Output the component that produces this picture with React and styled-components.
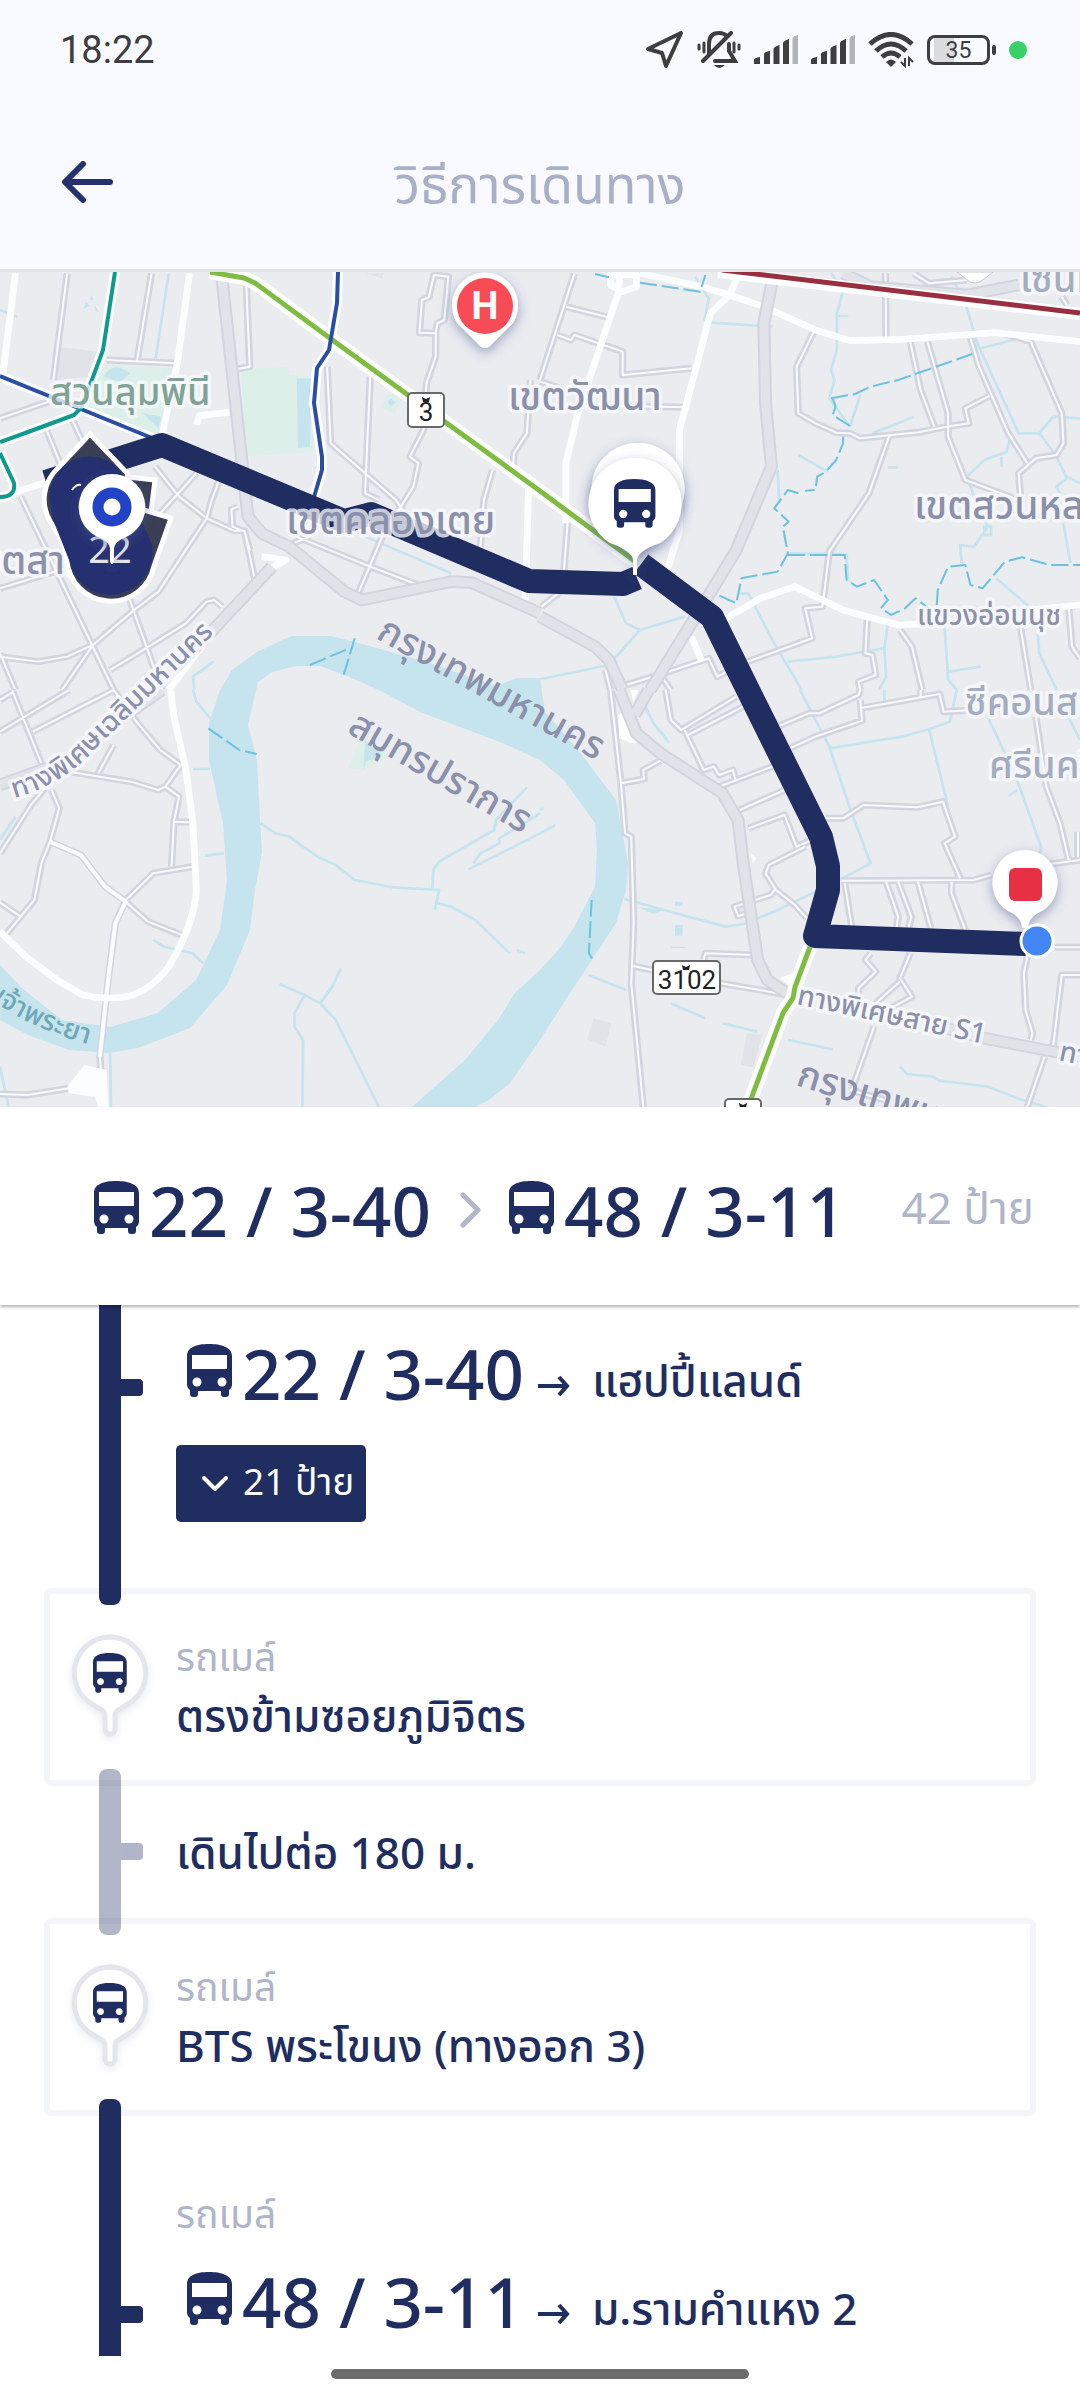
import React from 'react';
import styled, { createGlobalStyle, ThemeProvider } from 'styled-components';

const theme = {
  color: {
    navy: '#202d60',
    title: '#a9afc6',
    muted: '#b1b5c9',
    border: '#f4f5f8',
    header: '#f8faff',
    status: '#3e3e3e',
  },
};

// every tile is drawn on a 1568 x 1260 grid
const tiles = [
  {
    x: 0,
    y: 270,
    park: 'M700 300L835 290L840 315L910 320L910 545L720 558Z M310 285L500 295L465 500L250 405L275 330Z M1130 370L1165 390L1145 432L1105 412Z',
    pond: 'M862 325L905 325L900 530L865 535Z M300 320Q330 270 378 310L350 335Z M415 430L468 440L460 475Z M1135 385l14 12-14 12-10-12z M250 95l10 12-18 10zM265 75l8 14-12 0zM275 105l12 20-10 0z',
    block: 'M180 232L290 245L260 320L160 330Z M1060 10L1115 10L1110 25Z',
    canal: 'M490 10L452 265M565 1260L560 1220L620 1175M0 120l50 20M1060 800L1310 910',
    minor:
      'M195 10L155 330M440 10L398 272M310 270L515 280M715 40L725 290L690 297M0 445L150 392M60 680L330 1260M135 480L190 620M210 450L260 560M370 970L470 1260M450 590L520 680L600 745L680 782L710 782L740 930M640 620L615 690L600 745L460 965L390 1020L270 1125L195 1160L110 1175L0 1160M570 610L430 770M690 710L672 718L675 770L710 785L725 840M320 1200L400 1150L540 1060L600 995L622 990L645 1010M270 1125L180 1260M0 1150L45 1260M0 955L190 895M950 290L960 520L1150 690L1180 740M1075 320L1060 670L1100 690M1265 190L1265 260L1238 340L1230 480L1190 560L1215 580L1200 650L1110 800L1040 970M1260 15L1302 20L1290 150L1270 160L1265 190L1218 188L1225 90L1245 82Z M1430 600L1405 690L1395 830M1540 330L1530 490L1492 550L1490 590M860 800L1075 890L1215 945M900 800L850 820',
    major: 'M45 10L10 300L0 300M550 10L515 280L472 490M570 465L580 437L665 427M0 682L140 635M1535 650L1525 990M490 1260L600 1110M760 860L830 870L780 900',
    express: 'M645 30L720 740L760 790L840 830L1000 965L1050 990L1310 935L1370 938L1568 1030M790 890L600 1100L500 1200',
    dash: 'M900 1185L1015 1135M1030 1105L995 1225',
  },
  {
    x: 540,
    y: 270,
    canal:
      'M450 20L490 85L478 150L495 158L675 170M845 10L880 60L862 130L862 240L845 300L855 330L840 385L900 470M862 138L895 138M1195 20L1235 100L1270 220L1310 310L1390 490L1450 490L1490 440L1568 445M1280 235L1390 205M930 375L900 470M965 490L1040 460L1085 440M1450 490L1500 560L1530 625L1500 650L1510 670M1530 620L1568 640M1365 500L1355 545L1290 570L1240 620L1260 680L1300 770L1260 830L1220 825L1225 885M690 600L695 700M580 970L605 970L680 1120L760 1260M215 980L250 1060L290 1080M720 1175L860 1160L1000 1135L1010 1060M1000 1135L1005 1220L985 1260M1175 1070L1185 1230L1210 1260M1185 1205L1280 1190M1445 1090L1450 1150L1500 1260M1520 760L1540 880M750 555L835 605M1325 925L1420 1010M1340 560V590M0 1228L200 1185L290 1080L420 1040M1290 770h20v25h-20zM720 850L890 852L895 935M1010 592h30',
    minor:
      'M100 10L0 330M75 110L210 145M50 195L90 210L100 195L240 245L240 315L440 295M0 335L60 355M230 408L430 412M80 760L65 960L5 1010M1003 10L1005 220M795 185L745 290L750 430L800 460L860 488L900 490L930 505L1100 487L1180 470L1245 460L1235 415L1305 378M1075 215L1105 360L1145 470M1125 215L1185 430L1185 500L1235 630L1390 690M1250 205L1275 290L1360 490L1415 580M1345 190L1425 215L1515 430L1520 520L1500 555L1440 565L1390 610L1395 680M1015 495L955 670L840 845L830 930L820 1010L770 1015L790 1105L590 1180L515 1220L490 1165L360 1210L250 1245M950 1050L945 1150L965 1155L975 1215L925 1235L930 1260M1045 1080L1080 1130L1110 1260M1395 1070L1425 1260M1535 1010L1545 1130L1568 1165M1085 10L1130 40L1240 30M350 1215L380 1260M190 1200L205 1260M1515 80L1530 105',
    major:
      'M290 10L470 50L550 75L650 110L800 180L900 212L1050 208L1320 188L1568 215M230 60L110 430L75 580L75 760M575 20L550 75L495 130L405 480L405 780L370 900M540 1045L640 985L740 950L880 1020L1040 1065L1100 1062M440 1100L470 1175M1420 1020L1568 1005M205 15H280V50L240 65L205 45ZM230 15V50',
    express: 'M675 30L650 160L655 400L672 590L570 840L440 1060L320 1260M0 1040L160 1130L200 1170L240 1260M880 10L960 50L1240 75L1390 45',
    dash: 'M845 385L915 372L960 350L1040 330L1255 252M850 385L858 410L850 435L900 468M880 500L880 520L860 570L830 605L805 620L800 660L770 662M750 670L720 660L680 715L722 755L705 770L720 850L690 905L585 925L570 1000L510 972M720 855L885 855L890 930L920 950L970 930L1010 990L990 1015L1020 1035L1060 1015L1090 985L1135 1020M1152 1005L1155 960L1185 890L1235 885L1250 945L1285 955L1350 875L1400 862L1480 885L1568 885M160 12L200 22M290 38L465 65L480 15',
  },
  {
    x: 0,
    y: 690,
    park: 'M1050 140L1125 195L1060 240L1010 235Z',
    pond: 'M1060 150L1110 195L1062 215L1055 240Z',
    canal:
      'M560 0L570 35L615 90M560 237L610 237M757 400L800 430L840 440L880 470L930 505L975 525L1030 570L1140 592L1275 600L1262 660M1270 640L1310 650L1380 690L1480 790M1500 780L1525 790M1255 600L1258 540L1275 515L1435 420L1440 390L1530 292M1568 430L1360 538M1375 520L1395 490L1450 460L1450 445L1568 370M812 882L885 915L930 940L975 990L1100 1251M885 915L855 970L855 1010L880 1050L878 1251M990 835L965 890L930 940M445 750L475 770L560 790L590 820M320 1090L322 1251M0 450L45 380M0 1130L25 1251M595 497L650 490',
    minor:
      'M35 0L120 220M0 125L200 0M95 125L330 0M0 30L35 8M330 0L400 100L465 180L525 225L480 290L520 320L505 395L498 530M505 395L550 397M330 165L285 250M200 245L380 275L460 300L480 290M150 300L172 355L145 455L120 520L100 630L60 680L20 730M0 638L60 680M130 295L90 345L0 490M145 455L235 495L305 590L365 635L430 695L540 740M560 530L445 550L365 630L335 700L315 860L290 1100L300 1251M0 1212L80 1215L200 1195',
    major: 'M495 0L505 80L540 240L560 400L570 600Q565 700 490 830Q440 900 370 920Q300 930 240 915L165 870L75 800L0 725',
    junction: 'M195 1190L245 1125L310 1140L315 1251L285 1251L275 1220L200 1210Z',
    thin: 'M145 455L235 495L305 590L365 635L335 700L315 860L290 1100',
    express: 'M0 285L160 225M250 160L470 0',
    dash: 'M605 115L695 180L745 192',
  },
  {
    x: 540,
    y: 690,
    block: 'M155 985L207 1000L190 1070L137 1048ZM600 1030L645 1035L620 1132L583 1125Z',
    pond: 'M392 705h22v32h-22zM285 652l75 8-30 12zM392 635h22v12h-22zM380 770h40v4h-40z',
    canal:
      'M755 0L840 170L905 370L960 520L850 580L690 660L600 700L540 710L430 680L245 627M840 175L1050 140L1130 118L1190 95L1210 0M1130 118L1185 350M1290 60L1330 145L1385 270L1455 470L1450 500M1385 300L1360 318M305 50L330 100L375 158M1000 0V35M140 855L250 900M380 940L480 985M530 1000L630 1025M720 1050L850 1078M1045 1130L1065 1152L1140 1160L1160 1172L1300 1190L1400 1230L1470 1251M0 430L45 405M1500 10L1568 150M0 360L10 355',
    minor:
      'M205 0L235 280L247 430L265 440L272 700L265 880L300 1251M235 280L302 267L300 240L350 212M365 0L380 90L410 120L570 20M430 135L590 50M420 120L475 240L505 230L520 255L560 240L567 268M520 290L700 220M580 360L710 300M605 415L710 375L745 470L790 450M770 470L665 525L655 550L685 600L740 645L775 685M685 595L670 615L565 650L575 678L610 668M690 110L780 70L810 70L925 15L930 0M725 175L800 140L935 92L930 30M930 55L1160 12L1172 65L1260 60M1105 0V20M830 385L880 385L940 345L1095 352L1170 335L1205 440L1175 460L1220 565M875 572L1260 570L1310 555M1480 522L1568 510M1440 80L1470 290L1510 400L1535 510M1562 425V500M885 580L905 710M1005 575L1040 680L1035 715M1040 575L1078 680L1070 715M1097 575L1135 715M1195 575L1195 610L1235 720M270 828L325 840M525 880L720 915M475 810L480 790L620 795M960 790L945 810L975 845L925 895L925 920M1075 790L1045 865L1080 920L1010 960M1045 875L975 940M970 1010L905 1200M1415 800L1405 850L1410 960L1430 1030L1425 1050M1495 772H1568M1568 855L1515 855L1490 1070M1465 1100L1415 1251M900 1200L1000 1230M635 800L640 850L690 910',
    junction: 'M228 75L250 60L290 155L265 160L230 145ZM262 0H285L272 35ZM612 490L628 505L618 520ZM745 845L735 895L695 865Z',
    express: 'M230 0L280 130L350 190L530 310L575 390L590 520L632 810L660 870L740 925M315 0L275 75M1180 1015L1290 1045L1568 1100',
    dash: 'M150 630L142 790L157 815',
  },
];

const river =
  'M0 965L24 990L62 1020L110 1027L158 1013L196 980L220 930L227 880L223 823L209 760L209 723L220 690L232 670L257 652L291 636H331L355 642L430 663L496 686L516 678H540L545 712L578 750L616 800L628 863L626 890L616 923L561 1007L540 1040L510 1083L489 1100L475 1107H412L465 1060L498 1020L515 993L540 970L561 947L574 927L595 887L597 850L595 823L564 780L540 760L500 742L420 712L379 690L344 675L320 666H296L272 672L258 682L248 725L257 760L260 820L262 852L255 890L250 930L227 985L190 1028L138 1048L110 1053L69 1050L28 1035L0 1020Z';

const tealLine = 'M115 272L103 350L93 377L81 408L74 415L28 432L0 442M0 453L14 483Q16 497 0 497';
const blueLine = 'M0 376L152 438M338 272L337 303L329 350L317 368L314 403L322 457V470L314 497';
const greenLine = 'M210 272L244 278L255 283L331 339L540 491L636 562M810 947L795 987L793 998L783 1013L748 1107';

const TransitMap = () => (
  <StMap viewBox="0 272 1080 835" role="img" aria-label="แผนที่เส้นทาง">
    <defs>
      <path id="chaloem" d="M14 798Q64 785 98 746L230 618" />
      <path id="chaophraya" d="M-8 1000Q34 1032 110 1050" />
      <filter id="pinShadow" x="-50%" y="-50%" width="200%" height="200%">
        <feDropShadow dx="0" dy="4" stdDeviation="6" floodColor="#4a5590" floodOpacity="0.5" />
      </filter>
    </defs>
    <rect y="272" width="1080" height="835" fill="#eaecf0" />
    <path d={river} fill="#c6e4ee" />
    {tiles.map(({ x, y, park, pond, block, canal, minor, major, thin, junction, express, dash }) => (
      <g
        key={`${x}-${y}`}
        transform={`translate(${x} ${y}) scale(0.3444 0.3333)`}
        fill="none"
        strokeLinejoin="round"
      >
        <path d={block} fill="#e2e3e8" />
        <path d={park} fill="#dcefe8" />
        <path d={pond} fill="#c6e4ee" />
        <path d={canal} stroke="#c6e4ee" strokeWidth="8" />
        <path d={minor} stroke="#d3d5de" strokeWidth="21" />
        <path d={minor} stroke="#f8f9fc" strokeWidth="6" />
        <path d={thin} stroke="#fafbfd" strokeWidth="12" />
        <path d={major} stroke="#fcfdfe" strokeWidth="20" />
        <path d={junction} fill="#fcfdfe" />
        <path d={express} stroke="#d3d5de" strokeWidth="38" />
        <path d={express} stroke="#e2e3e9" strokeWidth="26" />
        <path d={dash} stroke="#6dc3dc" strokeWidth="6" strokeDasharray="50 14" />
      </g>
    ))}

    <g fill="none" strokeLinejoin="round">
      <g stroke="#fff" strokeWidth="10">
        <path d={tealLine} />
        <path d={blueLine} />
        <path d={greenLine} strokeWidth="14" />
        <path d="M718 272L1080 314" strokeWidth="12" />
      </g>
      <path d={greenLine} stroke="#7fbd42" strokeWidth="5" />
      <path d={blueLine} stroke="#2a4ea6" strokeWidth="4" />
      <path d={tealLine} stroke="#0f9a90" strokeWidth="4" />
      <path d="M722 270L1080 313" stroke="#982f40" strokeWidth="5" />
      <g stroke="#202d60" strokeWidth="24">
        <path d="M46 482L162 445L344 521L371 514L529 581L623 584L637 578" />
        <path d="M641 564L712 617L748 690L821 837L828 866V890L815 936L1026 944" />
      </g>
    </g>

    <StLabel x="50" y="405" $size={38} $green>สวนลุมพินี</StLabel>
    <StLabel x="286" y="534" $size={39}>เขตคลองเตย</StLabel>
    <StLabel x="508" y="410" $size={39}>เขตวัฒนา</StLabel>
    <StLabel x="914" y="519" $size={39}>เขตสวนหลวง</StLabel>
    <StLabel x="-32" y="574" $size={39}>เขตสาทร</StLabel>
    <StLabel x="917" y="625" $size={28}>แขวงอ่อนนุช</StLabel>
    <StLabel x="965" y="715" $size={38} $light>ซีคอนสแควร์</StLabel>
    <StLabel x="989" y="778" $size={38} $light>ศรีนครินทร์</StLabel>
    <StLabel x="1020" y="292" $size={38} $light>เซ็นทรัล</StLabel>
    <StLabel $size={28}><textPath href="#chaloem">ทางพิเศษเฉลิมมหานคร</textPath></StLabel>
    <StLabel $size={28} $water><textPath href="#chaophraya">เจ้าพระยา</textPath></StLabel>
    <StLabel transform="translate(375 638) rotate(29)" $size={38} $plain>กรุงเทพมหานคร</StLabel>
    <StLabel transform="translate(346 732) rotate(30)" $size={38} $plain>สมุทรปราการ</StLabel>
    <StLabel transform="translate(796 1004) rotate(12)" $size={28}>ทางพิเศษสาย S1</StLabel>
    <StLabel transform="translate(1058 1060) rotate(12)" $size={28}>ทางพิเศษสาย S1</StLabel>
    <StLabel transform="translate(795 1085) rotate(17)" $size={38} $plain>กรุงเทพมหานคร</StLabel>

    <g fill="#fff" stroke="#686868" strokeWidth="2">
      <rect x="408" y="393" width="36" height="34" rx="4" />
      <rect x="653" y="961" width="67" height="33" rx="4" />
      <rect x="725" y="1099" width="36" height="34" rx="4" />
    </g>
    <StShield x="426" y="421">3</StShield>
    <StShield x="687" y="989">3102</StShield>
    <path d="M422 397l4 2 4-2-1 5h-6zM682 965l4 2 4-2-1 5h-6zM739 1103l4 2 4-2-1 5h-6z" fill="#222" />

    <g filter="url(#pinShadow)">
      <path d="M485 348q-4 0-8-5l-20-20A33 33 0 1 1 513 323l-20 20q-4 5-8 5z" fill="#fff" />
    </g>
    <circle cx="485" cy="306" r="28" fill="#f84b55" />
    <StPinLetter x="485" y="319">H</StPinLetter>
    <path d="M957 272h36l-9 7q-9 8-18 0z" fill="#fff" stroke="#c9cad0" strokeWidth="1" />

    {/* overlapping stop bubbles behind the start pin */}
    <g strokeLinejoin="round">
      <path d="M100 474L155 480L150 520L110 540Z" fill="#3a3f56" stroke="#fff" strokeWidth="5" />
      <path d="M120 503L171 518L154 566A44 44 0 0 1 67 560L62 530Z" fill="#3a3f56" stroke="#fff" strokeWidth="5" />
      <path d="M90 434L58 468A43 43 0 0 0 50 521L66 548L112 520L128 474Z" fill="#3a3f56" stroke="#fff" strokeWidth="5" />
      <path d="M50 503A40 40 0 0 1 129 490L152 545A42 42 0 0 1 69 560L54 522Z" fill="#253071" />
      <path d="M72 490q4-6 9-5" stroke="#fff" strokeWidth="2" fill="none" />
    </g>
    <StBubbleText x="110" y="563">22</StBubbleText>

    <g fill="#fff">
      <path d="M638 443A46 46 0 0 1 663 528L638 556L613 528A46 46 0 0 1 638 443z" filter="url(#pinShadow)" />
      <g filter="url(#pinShadow)">
        <path d="M112 474A33 33 0 0 1 128 536Q115 541 114 548V562q-2 4-4 0V548Q109 541 96 536A33 33 0 0 1 112 474z" />
        <path d="M635 458A46 46 0 0 1 660 543Q637 551 637 560V575H633V560Q633 551 610 543A46 46 0 0 1 635 458z" />
        <path d="M1025 850A33 33 0 0 1 1042 911Q1028 917 1028 928H1022Q1022 917 1008 911A33 33 0 0 1 1025 850z" />
      </g>
    </g>
    <circle cx="112" cy="507" r="14" fill="none" stroke="#2243c5" strokeWidth="11" />
    <g transform="translate(614 479) scale(0.92)">
      <BusShape />
    </g>
    <rect x="1009" y="868" width="33" height="33" rx="6" fill="#e83045" />
    <circle cx="1037" cy="941" r="16" fill="#4285f4" stroke="#fff" strokeWidth="3" />
  </StMap>
);

const BusShape = () => (
  <>
    <path
      d="M0 12C0 3 10 0 22 0S45 3 45 12V41Q45 44 42 46V50Q42 53 39 53H37Q34 53 34 50V47H11V50Q11 53 8 53H6Q3 53 3 50V46Q0 44 0 41Z"
      fill="#202d60"
    />
    <path d="M5 11H40V25H5Z" fill="#fff" />
    <circle cx="10" cy="38" r="4.500" fill="#fff" />
    <circle cx="35" cy="38" r="4.500" fill="#fff" />
  </>
);

const BusIcon = () => (
  <StBus viewBox="0 0 45 53" aria-hidden="true">
    <BusShape />
  </StBus>
);

const StopPin = () => (
  <StPin viewBox="0 0 84 110" aria-hidden="true">
    <path
      d="M42 4A36 36 0 0 1 60 71L50 77Q47 79 47 82V96A5 5 0 0 1 37 96V82Q37 79 34 77L24 71A36 36 0 0 1 42 4z"
      fill="#fff"
      stroke="#e4e6ec"
      strokeWidth="5"
    />
    <g transform="translate(25 20) scale(0.75)">
      <BusShape />
    </g>
  </StPin>
);

const SignalIcon = () => (
  <svg width="44" height="30" viewBox="0 0 44 30" fill="#3e3e3e">
    <path d="M0 29V25Q0 23 6 22V29ZM10 29V19Q10 17 16 16V29ZM19.500 29V14Q19.500 12 25.500 10V29ZM29 29V8Q29 6 35 4V29Z" />
    <path d="M38.500 29V4Q38.500 1 44 0V29Z" fill="#b2b3b6" />
  </svg>
);

const StatusBar = () => (
  <StStatus>
    <time>18:22</time>
    <StStatusIcons>
      <svg width="38" height="38" viewBox="0 0 38 38">
        <path d="M35 2L20 35L16 22L2 18Z" fill="none" stroke="#3e3e3e" strokeWidth="4" strokeLinejoin="round" />
      </svg>
      <svg width="44" height="38" viewBox="0 0 44 38" fill="none" stroke="#3e3e3e" strokeLinecap="round">
        <path d="M12 23V13Q12 2 22 2Q27 2 30 5M32 13V20L38 30H18" strokeWidth="4" />
        <path d="M6 30L34 2" strokeWidth="4" />
        <path d="M2 14v4M7 12v9M37 12v9M42 14v4" strokeWidth="3" />
        <path d="M17 34H28Q22 40 17 34Z" fill="#3e3e3e" stroke="none" />
      </svg>
      <SignalIcon />
      <SignalIcon />
      <svg width="46" height="36" viewBox="0 0 46 36" fill="none" stroke="#3e3e3e" strokeWidth="5">
        <path d="M2 12Q23 -7 44 12M8 19Q23 5 38 19M14 25Q23 17 32 25" />
        <path d="M18 30Q23 25 28 30L23 35Z" fill="#3e3e3e" stroke="none" />
        <path d="M33 30L37 34V26M45 30L41 26V34" strokeWidth="2" />
      </svg>
      <StBattery>
        <span>35</span>
      </StBattery>
      <StDot />
    </StStatusIcons>
  </StStatus>
);

const RouteName = ({ name }) => (
  <StRoute>
    <BusIcon />
    <span>{name}</span>
  </StRoute>
);

const Leg = ({ name, to, stops, caption, tick, last }) => (
  <StLeg>
    <StRail $tick={tick} $top={caption && 17} $bottom={!last && 17} />
    <StLegBody $caption={caption}>
      {caption && <StCaption>{caption}</StCaption>}
      <StLegTitle>
        <RouteName name={name} />
        <StArrow viewBox="0 0 32 22" aria-hidden="true">
          <path d="M0 11H29M21 2L29 11L21 20" fill="none" stroke="#202d60" strokeWidth="4" />
        </StArrow>
        <StName>{to}</StName>
      </StLegTitle>
      {stops && (
        <StStopsButton type="button">
          <svg width="28" height="18" viewBox="0 0 28 18" aria-hidden="true">
            <path d="M3 3L14 14L25 3" fill="none" stroke="#fff" strokeWidth="4" strokeLinecap="round" strokeLinejoin="round" />
          </svg>
          {stops}
        </StStopsButton>
      )}
    </StLegBody>
  </StLeg>
);

const StopCard = ({ kind, name }) => (
  <StCard>
    <StopPin />
    <div>
      <StCaption>{kind}</StCaption>
      <StName>{name}</StName>
    </div>
  </StCard>
);

const App = () => {
  return (
    <ThemeProvider theme={theme}>
      <GlobalStyle />
      <StPage>
        <StTop>
          <StatusBar />
          <StHeader>
            <StBack type="button" aria-label="ย้อนกลับ">
              <svg width="52" height="42" viewBox="0 0 52 42">
                <path d="M48 21H4M21 3L3 21L21 39" fill="none" stroke="#25316f" strokeWidth="6" strokeLinecap="round" strokeLinejoin="round" />
              </svg>
            </StBack>
            <StTitle>วิธีการเดินทาง</StTitle>
          </StHeader>
        </StTop>
        <TransitMap />
        <StSummary>
          <RouteName name="22 / 3-40" />
          <svg width="22" height="36" viewBox="0 0 22 36" aria-hidden="true">
            <path d="M4 3L19 18L4 33" fill="none" stroke="#b1b6c9" strokeWidth="5" strokeLinecap="round" strokeLinejoin="round" />
          </svg>
          <RouteName name="48 / 3-11" />
          <StTotal>42 ป้าย</StTotal>
        </StSummary>
        <StSteps>
          <Leg name="22 / 3-40" to="แฮปปี้แลนด์" stops="21 ป้าย" tick={74} />
          <StopCard kind="รถเมล์" name="ตรงข้ามซอยภูมิจิตร" />
          <StLeg>
            <StRail $walk $tick={74} $top={17} $bottom={17} />
            <StWalk>เดินไปต่อ 180 ม.</StWalk>
          </StLeg>
          <StopCard kind="รถเมล์" name="BTS พระโขนง (ทางออก 3)" />
          <Leg name="48 / 3-11" to="ม.รามคำแหง 2" caption="รถเมล์" tick={207} last />
        </StSteps>
        <StGesture />
      </StPage>
    </ThemeProvider>
  );
};

const GlobalStyle = createGlobalStyle`
  * {
    box-sizing: border-box;
  }

  body {
    margin: 0;
    background: #fff;
    font-family: 'Noto Sans', 'Noto Sans Thai', sans-serif;
    color: ${({ theme }) => theme.color.navy};
  }
`;

const StPage = styled.main`
  display: flex;
  flex-direction: column;
  height: 100vh;
  overflow: hidden;
`;

const StTop = styled.div`
  flex: none;
  background: ${({ theme }) => theme.color.header};
  border-bottom: 3px solid #e2e4e8;
`;

const StStatus = styled.div`
  display: flex;
  justify-content: space-between;
  align-items: center;
  height: 100px;
  padding: 0 53px 0 60px;
  font-family: Roboto, sans-serif;
  font-size: 38px;
  color: ${({ theme }) => theme.color.status};
`;

const StStatusIcons = styled.div`
  display: flex;
  align-items: center;
  gap: 13px;
`;

const StBattery = styled.div`
  position: relative;
  display: flex;
  justify-content: center;
  align-items: center;
  width: 63px;
  height: 30px;
  margin-right: 6px;
  border: 3px solid ${({ theme }) => theme.color.status};
  border-radius: 8px;
  background: linear-gradient(90deg, #dadbde 20px, transparent 20px) 4px / 100% no-repeat;
  font-size: 23px;

  &::after {
    content: '';
    position: absolute;
    right: -9px;
    width: 4px;
    height: 10px;
    border-radius: 2px;
    background: ${({ theme }) => theme.color.status};
  }
`;

const StDot = styled.i`
  width: 18px;
  height: 18px;
  border-radius: 50%;
  background: #38d168;
`;

const StHeader = styled.header`
  display: grid;
  grid-template-columns: 60px 1fr 60px;
  align-items: center;
  height: 169px;
  padding: 0 62px 6px;
`;

const StBack = styled.button`
  display: flex;
  padding: 0;
  border: 0;
  background: none;
  cursor: pointer;
`;

const StTitle = styled.h1`
  margin: 0;
  padding-top: 10px;
  font-size: 52px;
  font-weight: 400;
  text-align: center;
  color: ${({ theme }) => theme.color.title};
`;

const StMap = styled.svg`
  display: block;
  flex: none;
  width: 100%;
  height: auto;
`;

const StLabel = styled.text`
  font-size: ${({ $size }) => $size}px;
  font-weight: 500;
  fill: ${({ $green, $water, $light }) =>
    ($green && '#7fa394') || ($water && '#6fa8b8') || ($light && '#a3adbf') || '#8b90ab'};
  stroke: ${({ $water, $plain }) => ($water || $plain ? 'none' : '#f8f9fc')};
  stroke-opacity: 0.8;
  stroke-width: 7px;
  stroke-linejoin: round;
  paint-order: stroke;
`;

const StShield = styled.text`
  font-family: Roboto, sans-serif;
  font-size: 26px;
  text-anchor: middle;
  fill: #222;
`;

const StPinLetter = styled.text`
  font-family: Roboto, sans-serif;
  font-size: 38px;
  font-weight: 700;
  text-anchor: middle;
  fill: #fff;
`;

const StBubbleText = styled.text`
  font-size: 38px;
  text-anchor: middle;
  fill: #e6e8f0;
`;

const StSummary = styled.section`
  position: relative;
  z-index: 2;
  display: flex;
  flex: none;
  align-items: center;
  gap: 28px;
  height: 198px;
  padding: 8px 46px 0 94px;
  background: #fff;
  box-shadow: 0 2px 3px rgba(0, 0, 0, 0.3);
`;

const StRoute = styled.div`
  display: flex;
  align-items: center;
  gap: 10px;
  font-size: 69px;
  font-weight: 500;
  line-height: 80px;
  white-space: nowrap;
`;

const StBus = styled.svg`
  flex: none;
  width: 45px;
  height: 53px;
  margin-bottom: 6px;
`;

const StTotal = styled.span`
  margin-left: auto;
  font-size: 44px;
  color: ${({ theme }) => theme.color.muted};
  white-space: nowrap;
`;

const StSteps = styled.section`
  flex: 1;
  min-height: 0;
  overflow: hidden;
`;

const StLeg = styled.div`
  display: flex;
  gap: 55px;
  padding-left: 99px;
`;

const StRail = styled.div`
  position: relative;
  z-index: 1;
  flex: none;
  width: 22px;
  margin: -${({ $top }) => $top || 0}px 0 -${({ $bottom }) => $bottom || 0}px;
  border-radius: ${({ $top }) => ($top ? '8px 8px' : '0 0')} 8px 8px;
  background: ${({ $walk, theme }) => ($walk ? 'rgba(32, 45, 96, 0.35)' : theme.color.navy)};

  &::after {
    content: '';
    position: absolute;
    top: ${({ $tick }) => $tick}px;
    left: 22px;
    width: 22px;
    height: 17px;
    border-radius: 0 4px 4px 0;
    background: ${({ $walk, theme }) => ($walk ? '#b1b5c9' : theme.color.navy)};
  }
`;

const StLegBody = styled.div`
  padding: ${({ $caption }) => ($caption ? '68px 0 0' : '28px 0 66px')};
`;

const StLegTitle = styled.div`
  display: flex;
  align-items: baseline;
  gap: 14px;
  height: 80px;
  padding-left: 11px;
  margin-bottom: 32px;
`;

const StArrow = styled.svg`
  flex: none;
  width: 32px;
  height: 22px;
  margin: 0 8px 4px 0;
`;

const StCaption = styled.div`
  padding-top: 2px;
  font-size: 39px;
  line-height: 54px;
  color: ${({ theme }) => theme.color.muted};

  & + ${StLegTitle} {
    margin-top: 21px;
  }
`;

const StName = styled.div`
  font-size: 44px;
  font-weight: 500;
  line-height: 64px;
  white-space: nowrap;
`;

const StWalk = styled(StName)`
  padding: 34px 0;
`;

const StStopsButton = styled.button`
  display: flex;
  align-items: center;
  gap: 14px;
  height: 77px;
  padding: 0 12px 0 25px;
  border: 0;
  border-radius: 5px;
  background: ${({ theme }) => theme.color.navy};
  font: inherit;
  font-size: 37px;
  color: #fff;
  cursor: pointer;
`;

const StCard = styled.article`
  display: flex;
  gap: 24px;
  margin: 0 44px;
  padding: 33px 18px;
  border: 6px solid ${({ theme }) => theme.color.border};
  border-radius: 8px;
`;

const StPin = styled.svg`
  flex: none;
  width: 84px;
  height: 110px;
  margin-top: 6px;
  filter: drop-shadow(0 3px 4px rgba(32, 45, 96, 0.1));
`;

const StGesture = styled.div`
  flex: none;
  align-self: center;
  width: 39%;
  max-width: 418px;
  height: 10px;
  margin: 13px 0 21px;
  border-radius: 5px;
  background: #6b6b6b;
`;

export default App;
